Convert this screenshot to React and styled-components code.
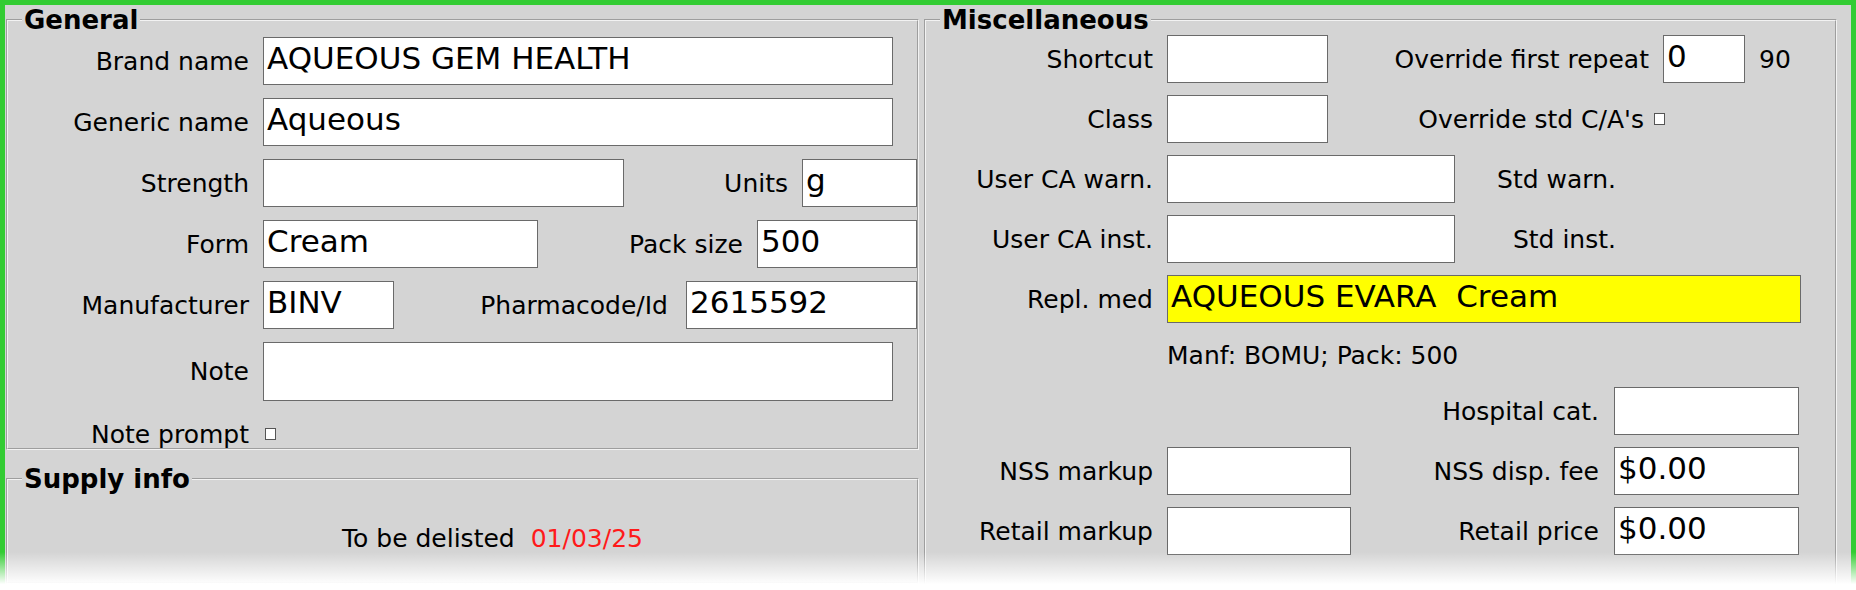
import React from 'react';
import styled, { createGlobalStyle } from 'styled-components';

const Global = createGlobalStyle`
  body { margin: 0; font-family: "DejaVu Sans", Verdana, sans-serif; }
  #root { width: 1856px; height: 590px; overflow: hidden; }
`;

const Frame = styled.div`
  position: relative;
  box-sizing: border-box;
  width: 1856px;
  height: 590px;
  border: 5px solid #33cc33;
  border-bottom: none;
  background: #d4d4d4;
  display: grid;
  grid-template-columns: 913px 913px;
  column-gap: 5px;
  padding: 0 15px 0 1px;
  color: #000;
`;

const Column = styled.div`
  display: flex;
  flex-direction: column;
  gap: 14px;
`;

const Group = styled.fieldset`
  margin: 0;
  box-sizing: border-box;
  border: 2px groove #f2f2f2;
  border-top-width: 2px;
  padding: 0;
  height: ${p => p.$h}px;
  display: flex;
  flex-direction: column;
`;

const Legend = styled.legend`
  font-weight: bold;
  font-size: 26px;
  padding: 0 2px;
  margin-left: 14px;
  line-height: 30px;
`;

const Rows = styled.div`
  display: flex;
  flex-direction: column;
  gap: ${p => p.$gap || 12}px;
  padding-top: ${p => p.$top || 0}px;
`;

const Row = styled.div`
  display: flex;
  align-items: center;
  height: ${p => p.$h || 48}px;
`;

const Label = styled.span`
  font-size: 25px;
  white-space: nowrap;
  text-align: right;
  width: ${p => (p.$w ? p.$w + 'px' : 'auto')};
  flex: ${p => (p.$grow ? 1 : 'none')};
  padding-right: ${p => (p.$pr ?? 14)}px;
  padding-left: ${p => p.$pl || 0}px;
  box-sizing: border-box;
  color: ${p => p.$color || '#000'};
`;

const Field = styled.div`
  box-sizing: border-box;
  width: ${p => p.$w}px;
  height: ${p => p.$h || 48}px;
  background: ${p => p.$bg || '#fff'};
  border: 1px solid #6a6a6a;
  font-size: 31px;
  line-height: 40px;
  padding: 0 3px;
  white-space: pre;
  overflow: hidden;
`;

const Check = styled.span`
  display: inline-block;
  width: 9px;
  height: 10px;
  border: 1.5px solid #555;
  background: #fff;
  margin-left: 2px;
`;

const Center = styled.div`
  display: flex;
  justify-content: center;
  padding-top: 30px;
  padding-left: 60px;
`;

const Fade = styled.div`
  position: absolute;
  left: -5px;
  right: -5px;
  bottom: 0;
  height: 38px;
  background: linear-gradient(rgba(255,255,255,0), #fff 85%);
`;

export default function App() {
  return (
    <>
      <Global />
      <Frame>
        <Column>
          <Group $h={445}>
            <Legend>General</Legend>
            <Rows $top={2} $gap={13}>
              <Row><Label $w={255}>Brand name</Label><Field $w={630}>AQUEOUS GEM HEALTH</Field></Row>
              <Row><Label $w={255}>Generic name</Label><Field $w={630}>Aqueous</Field></Row>
              <Row><Label $w={255}>Strength</Label><Field $w={361} /><Label $grow>Units</Label><Field $w={115}>g</Field></Row>
              <Row><Label $w={255}>Form</Label><Field $w={275}>Cream</Field><Label $grow>Pack size</Label><Field $w={160}>500</Field></Row>
              <Row><Label $w={255}>Manufacturer</Label><Field $w={131}>BINV</Field><Label $grow $pr={18}>Pharmacode/Id</Label><Field $w={231}>2615592</Field></Row>
              <Row $h={59}><Label $w={255}>Note</Label><Field $w={630} $h={59} /></Row>
              <Row $h={40}><Label $w={255}>Note prompt</Label><Check /></Row>
            </Rows>
          </Group>
          <Group $h={120}>
            <Legend>Supply info</Legend>
            <Center>
              <Label $pr={16}>To be delisted</Label>
              <Label $pr={0} $color="#ff1a1a">01/03/25</Label>
            </Center>
          </Group>
        </Column>
        <Group $h={600}>
          <Legend>Miscellaneous</Legend>
          <Rows $top={0} $gap={12}>
            <Row><Label $w={241}>Shortcut</Label><Field $w={161} /><Label $grow>Override first repeat</Label><Field $w={82}>0</Field><Label $pl={14} $w={90} $pr={0} style={{ textAlign: 'left' }}>90</Label></Row>
            <Row><Label $w={241}>Class</Label><Field $w={161} /><Label $grow $pr={8}>Override std C/A's</Label><Check /><Label $w={170} $pr={0} /></Row>
            <Row><Label $w={241}>User CA warn.</Label><Field $w={288} /><Label $w={161} $pr={0}>Std warn.</Label></Row>
            <Row><Label $w={241}>User CA inst.</Label><Field $w={288} /><Label $w={161} $pr={0}>Std inst.</Label></Row>
            <Row><Label $w={241}>Repl. med</Label><Field $w={634} $bg="#ffff00">AQUEOUS EVARA  Cream</Field></Row>
            <Row $h={40}><Label $w={241} /><Label $pr={0}>Manf: BOMU; Pack: 500</Label></Row>
            <Row><Label $grow $pr={15}>Hospital cat.</Label><Field $w={185} /><Label $w={36} $pr={0} /></Row>
            <Row><Label $w={241}>NSS markup</Label><Field $w={184} /><Label $grow $pr={15}>NSS disp. fee</Label><Field $w={185}>$0.00</Field><Label $w={36} $pr={0} /></Row>
            <Row><Label $w={241}>Retail markup</Label><Field $w={184} /><Label $grow $pr={15}>Retail price</Label><Field $w={185}>$0.00</Field><Label $w={36} $pr={0} /></Row>
          </Rows>
        </Group>
        <Fade />
      </Frame>
    </>
  );
}
